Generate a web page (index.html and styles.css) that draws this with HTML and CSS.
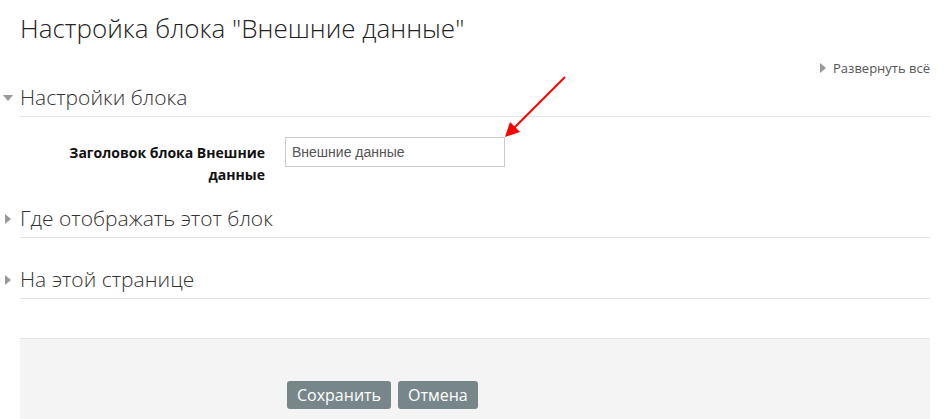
FILE: index.html
```html
<!DOCTYPE html>
<html lang="ru">
<head>
    <meta charset="UTF-8">
    <title>Настройка блока</title>
    <link rel="stylesheet" href="styles.css">
</head>
<body>
    <div class="page">
        <h2 class="page-title">Настройка блока "Внешние данные"</h2>

        <div class="collapsible-actions">
            <a href="#" class="expand-all"><span class="tri-right"></span>Развернуть всё</a>
        </div>

        <div class="section section-first">
            <div class="section-head"><span class="tri-down"></span>Настройки блока</div>
            <div class="fitem">
                <label class="fitem-label" for="title">Заголовок блока Внешние данные</label>
                <div class="fitem-element">
                    <input type="text" id="title" class="text-input" value="Внешние данные">
                </div>
            </div>
        </div>

        <div class="section">
            <div class="section-head"><span class="tri-right"></span>Где отображать этот блок</div>
        </div>

        <div class="section">
            <div class="section-head"><span class="tri-right"></span>На этой странице</div>
        </div>

        <div class="form-buttons">
            <button class="btn">Сохранить</button>
            <button class="btn">Отмена</button>
        </div>

        <svg class="pointer" width="70" height="70" viewBox="0 0 70 70">
            <line x1="65" y1="2" x2="12" y2="55" stroke="#f00" stroke-width="2"/>
            <polygon points="5,62 10,47 20,57" fill="#f00"/>
        </svg>
    </div>
</body>
</html>
```

FILE: styles.css
```css
body {
    margin: 0;
    font-family: "Open Sans", sans-serif;
    color: #333;
    background-color: #fff;
}

.page {
    position: relative;
    padding: 0 18px 0 20px;
}

.page-title {
    font-size: 26px;
    font-weight: 300;
    margin: 0;
    padding-top: 9px;
    line-height: 38px;
    color: #222;
}

.collapsible-actions {
    text-align: right;
    margin-top: 11px;
    line-height: 18px;
}

.expand-all {
    font-size: 13px;
    color: #555;
    text-decoration: none;
}

.tri-right,
.tri-down {
    display: inline-block;
    width: 0;
    height: 0;
    vertical-align: middle;
}

.tri-right {
    border-top: 5px solid transparent;
    border-bottom: 5px solid transparent;
    border-left: 6px solid #999;
}

.tri-down {
    border-left: 5px solid transparent;
    border-right: 5px solid transparent;
    border-top: 6px solid #999;
}

.expand-all .tri-right {
    margin-right: 7px;
    margin-top: -3px;
}

.section {
    margin-top: 27px;
}

.section-first {
    margin-top: 6px;
}

.section-head {
    font-size: 21px;
    font-weight: 300;
    color: #333;
    line-height: 28px;
    padding-bottom: 5px;
    border-bottom: 1px solid #e3e3e3;
}

.section-head .tri-right {
    margin-left: -15px;
    margin-right: 9px;
    margin-top: -3px;
}

.section-head .tri-down {
    margin-left: -17px;
    margin-right: 7px;
    margin-top: -3px;
}

.fitem {
    display: flex;
    gap: 20px;
    padding-top: 20px;
    padding-bottom: 18px;
    margin-bottom: -27px;
}

.fitem-label {
    width: 245px;
    text-align: right;
    font-size: 14px;
    font-weight: 700;
    line-height: 22px;
    color: #111;
    padding-top: 5px;
}

.text-input {
    width: 220px;
    height: 30px;
    box-sizing: border-box;
    border: 1px solid #ccc;
    padding: 4px 6px;
    font-family: "Liberation Sans", Arial, sans-serif;
    font-size: 14px;
    color: #555;
}

.form-buttons {
    margin-top: 39px;
    background-color: #f4f4f4;
    border-top: 1px solid #e5e5e5;
    padding: 42px 0 20px 267px;
    display: flex;
    gap: 7px;
}

.btn {
    background-color: #778789;
    color: #fff;
    border: 0;
    border-radius: 3px;
    font-family: "Open Sans", sans-serif;
    font-size: 16px;
    height: 28px;
    padding: 0 10px;
}

.pointer {
    position: absolute;
    left: 500px;
    top: 75px;
}
```
